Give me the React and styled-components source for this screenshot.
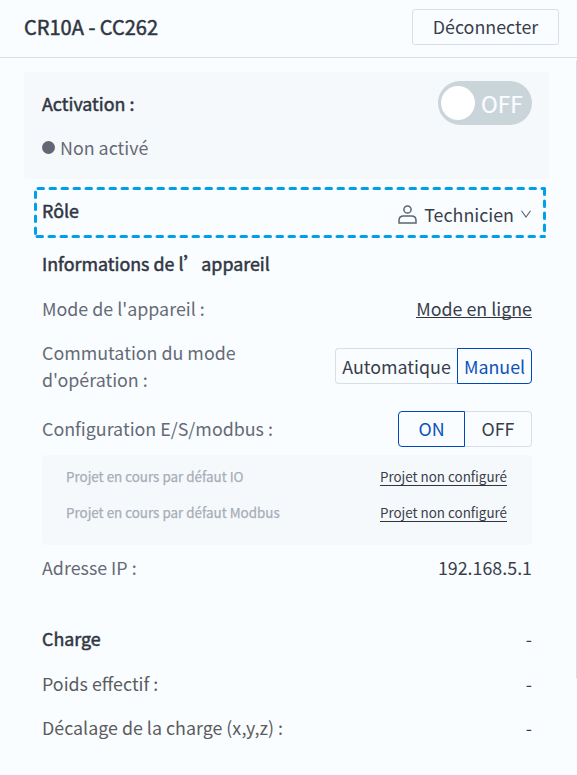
import React from "react";
import styled, { createGlobalStyle } from "styled-components";

const GlobalStyle = createGlobalStyle`
  *, *::before, *::after { box-sizing: border-box; }
  body {
    margin: 0;
    background: #f9fdff;
    color: #3a3e4b;
    font-family: "Noto Sans CJK SC", sans-serif;
    font-size: 17.85px;
    line-height: 27px;
  }
  button { font: inherit; color: inherit; margin: 0; padding: 0; cursor: pointer; }
`;

const Panel = styled.main`
  position: relative;
  width: 577px;
  height: 775px;
  overflow: hidden;
`;

const Header = styled.header`
  display: flex;
  align-items: center;
  justify-content: space-between;
  height: 58px;
  padding: 0 18px 4px 24px;
  border-bottom: 1px solid #d9dfe4;
`;

const Heading = styled.h2`
  margin: 0;
  padding-bottom: ${(p) => p.$lift || 0}px;
  font-size: ${(p) => p.$size || 17.85}px;
  font-weight: 400;
  color: #303542;
  -webkit-text-stroke: 0.5px #303542;
`;

const DisconnectButton = styled.button`
  width: 147px;
  height: 36px;
  border: 1px solid #d9dfe4;
  border-radius: 3px;
  background: transparent;
`;

const ActivationCard = styled.section`
  display: flex;
  justify-content: space-between;
  width: 525px;
  height: 107px;
  margin: 14px 0 0 24px;
  padding: 9px 17px 0 18px;
  border-radius: 4px;
  background: #f6f9fc;
`;

const ActivationText = styled.div`
  display: flex;
  flex-direction: column;
  gap: 17px;
  padding-top: 9px;
`;

const Status = styled.div`
  display: flex;
  align-items: center;
  gap: 5px;
  color: #666a76;
`;

const StatusDot = styled.span`
  width: 13px;
  height: 13px;
  border-radius: 50%;
  background: #636773;
`;

const Switch = styled.button`
  display: flex;
  align-items: center;
  gap: 6px;
  width: 94px;
  height: 44px;
  padding: 0 0 1px 3px;
  border: 0;
  border-radius: 22px;
  background: #cad5d9;
  color: #fafdff;
  font-size: 22.6px;
  -webkit-text-stroke: 0.2px #fafdff;
`;

const SwitchKnob = styled.span`
  width: 34px;
  height: 34px;
  border-radius: 50%;
  background: #fff;
`;

const SwitchText = styled.span`
  padding-top: 2px;
`;

const Details = styled.section`
  width: 490px;
  margin-left: 42px;
`;

const Row = styled.div`
  position: relative;
  display: flex;
  align-items: center;
  justify-content: space-between;
  height: ${(p) => p.$height || 44}px;
  padding-top: ${(p) => p.$inset || 0}px;
`;

const Label = styled.span`
  max-width: 250px;
  padding-bottom: ${(p) => p.$lift || 0}px;
  color: ${(p) => (p.$neutral ? "#5c5c5e" : "#666a76")};
`;

const Outline = styled.svg`
  position: absolute;
  left: -8px;
  top: 8px;
  pointer-events: none;
`;

const RoleSelect = styled.button`
  display: flex;
  align-items: center;
  margin-top: 6px;
  border: 0;
  background: transparent;
`;

const PersonIcon = styled.svg`
  margin-right: 7px;
`;

const Chevron = styled.svg`
  margin: 0 1px 0 7px;
`;

const Link = styled.a`
  height: 20px;
  line-height: 20px;
  border-bottom: 1px solid #303542;
`;

const Segments = styled.div`
  display: flex;
  height: 36px;
`;

const Segment = styled.button`
  width: ${(p) => p.$width}px;
  padding-bottom: ${(p) => p.$lift || 0}px;
  border: 1px solid ${(p) => (p.$active ? "#0049b5" : "#d9dfe4")};
  background: transparent;
  color: ${(p) => (p.$active ? "#0d50bd" : "#3a3e4b")};
  &:first-child {
    border-radius: 4px 0 0 4px;
    ${(p) => !p.$active && "border-right: 0;"}
  }
  &:last-child {
    border-radius: 0 4px 4px 0;
    ${(p) => !p.$active && "border-left: 0;"}
  }
`;

const ProjectBox = styled.div`
  height: 90px;
  padding: 4px 25px 0 24px;
  border-radius: 4px;
  background: #f6f9fc;
  font-size: 13.4px;
`;

const ProjectRow = styled.div`
  display: flex;
  align-items: center;
  justify-content: space-between;
  height: 36px;
`;

const ProjectName = styled.span`
  padding-bottom: 2px;
  color: #a7adb8;
  -webkit-text-stroke: 0.25px #a7adb8;
`;

const ProjectLink = styled.a`
  height: 18px;
  line-height: 17px;
  border-bottom: 1px solid #303542;
`;

const Spacer = styled.div`
  height: ${(p) => p.$height}px;
`;

const ScrollThumb = styled.div`
  position: absolute;
  left: 576px;
  top: 60px;
  width: 3px;
  height: 619px;
  border-radius: 2px;
  background: #d9dde1;
`;

const projects = ["Projet en cours par défaut IO", "Projet en cours par défaut Modbus"];

export default function App() {
  return (
    <Panel>
      <GlobalStyle />
      <Header>
        <Heading $size={20.05}>CR10A - CC262</Heading>
        <DisconnectButton>Déconnecter</DisconnectButton>
      </Header>
      <ActivationCard>
        <ActivationText>
          <Heading>Activation :</Heading>
          <Status><StatusDot />Non activé</Status>
        </ActivationText>
        <Switch><SwitchKnob /><SwitchText>OFF</SwitchText></Switch>
      </ActivationCard>
      <Details>
        <Row $height={64}>
          <Outline width="512" height="51" fill="none" stroke="#00a0e9" strokeWidth="3" strokeLinecap="round">
            <path d="M4 1.5H510.5" strokeDasharray="5.5 6.5" />
            <path d="M3 49.5H510.5" strokeDasharray="5.5 6.5" />
            <path d="M1.5 5V48" strokeDasharray="5.5 6.5" />
            <path d="M510.5 2V48" strokeDasharray="5.5 6.5" />
          </Outline>
          <Heading $lift={2}>Rôle</Heading>
          <RoleSelect>
            <PersonIcon width="19" height="19" viewBox="0 0 19 19" fill="none" stroke="#5f636f" strokeWidth="1.5">
              <circle cx="9.5" cy="4.5" r="3.6" />
              <path d="M1 18V15.5Q1 11 5.5 11H13.5Q18 11 18 15.5V18Z" />
            </PersonIcon>
            Technicien
            <Chevron width="10" height="8" fill="none" stroke="#5f636f" strokeWidth="1.1">
              <path d="M.5 .8L5 7.1L9.5 .8" />
            </Chevron>
          </RoleSelect>
        </Row>
        <Row $height={43}><Heading $lift={2}>Informations de l’appareil</Heading></Row>
        <Row $height={44}><Label>Mode de l'appareil :</Label><Link>Mode en ligne</Link></Row>
        <Row $height={72}>
          <Label>Commutation du mode d'opération :</Label>
          <Segments>
            <Segment $width={122}>Automatique</Segment>
            <Segment $width={75} $active>Manuel</Segment>
          </Segments>
        </Row>
        <Row $height={53} $inset={1}>
          <Label $lift={2}>Configuration E/S/modbus :</Label>
          <Segments>
            <Segment $width={67} $lift={2} $active>ON</Segment>
            <Segment $width={67} $lift={2}>OFF</Segment>
          </Segments>
        </Row>
        <ProjectBox>
          {projects.map((name) => (
            <ProjectRow key={name}>
              <ProjectName>{name}</ProjectName>
              <ProjectLink>Projet non configuré</ProjectLink>
            </ProjectRow>
          ))}
        </ProjectBox>
        <Row $height={44}><Label>Adresse IP :</Label><span>192.168.5.1</span></Row>
        <Spacer $height={26} />
        <Row $height={46}><Heading>Charge</Heading><span>-</span></Row>
        <Row $height={44}><Label $neutral>Poids effectif :</Label><span>-</span></Row>
        <Row $height={44}><Label $neutral>Décalage de la charge (x,y,z) :</Label><span>-</span></Row>
      </Details>
      <ScrollThumb />
    </Panel>
  );
}
